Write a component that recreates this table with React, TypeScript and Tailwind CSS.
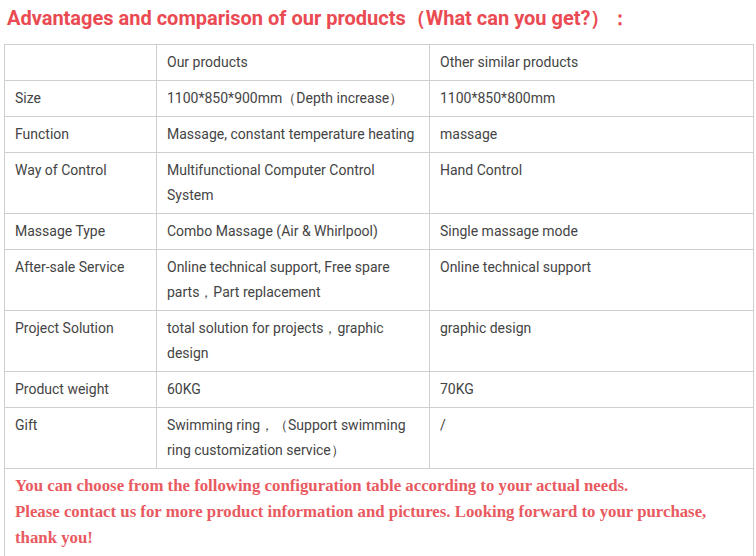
const rows: [string, string, string][] = [
  ["Size", "1100*850*900mm（Depth increase）", "1100*850*800mm"],
  ["Function", "Massage, constant temperature heating", "massage"],
  ["Way of Control", "Multifunctional Computer Control System", "Hand Control"],
  ["Massage Type", "Combo Massage (Air & Whirlpool)", "Single massage mode"],
  ["After-sale Service", "Online technical support, Free spare parts，Part replacement", "Online technical support"],
  ["Project Solution", "total solution for projects，graphic design", "graphic design"],
  ["Product weight", "60KG", "70KG"],
  ["Gift", "Swimming ring，（Support swimming ring customization service）", "/"],
];

export default function App() {
  return (
    <div className="w-[756px] h-[556px] bg-white overflow-hidden font-['Roboto',sans-serif]">
      <h2 className="pl-[7px] pt-[4px] h-[44px] text-[20px] leading-[28px] font-bold text-[#ea4a52]">
        Advantages and comparison of our products（What can you get?）：
      </h2>
      <table className="ml-[4px] w-[750px] border-collapse table-fixed text-[14px] leading-[25px] text-[#444]">
        <colgroup>
          <col className="w-[152px]" />
          <col className="w-[273px]" />
          <col />
        </colgroup>
        <tbody>
          <tr>
            <td className="border border-[#cfcfcf] px-[10px] py-[5px]"></td>
            <td className="border border-[#cfcfcf] px-[10px] py-[5px]">Our products</td>
            <td className="border border-[#cfcfcf] px-[10px] py-[5px]">Other similar products</td>
          </tr>
          {rows.map(([label, ours, other]) => (
            <tr key={label}>
              <td className="border border-[#cfcfcf] px-[10px] py-[5px] align-top">{label}</td>
              <td className="border border-[#cfcfcf] px-[10px] py-[5px] align-top">{ours}</td>
              <td className="border border-[#cfcfcf] px-[10px] py-[5px] align-top">{other}</td>
            </tr>
          ))}
          <tr>
            <td
              colSpan={3}
              className="border border-[#cfcfcf] px-[10px] pt-[4px] pb-[6px] font-['Liberation_Serif',serif] font-bold text-[16.8px] leading-[26px] text-[#e85a5f]"
            >
              You can choose from the following configuration table according to your actual needs.
              <br />
              Please contact us for more product information and pictures. Looking forward to your purchase,
              <br />
              thank you!
            </td>
          </tr>
        </tbody>
      </table>
    </div>
  );
}
